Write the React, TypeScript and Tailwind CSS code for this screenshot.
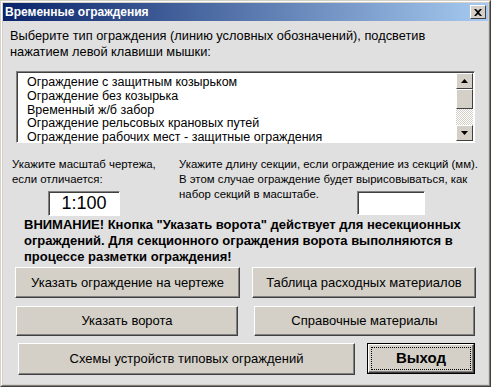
import React from 'react';

const ITEMS = [
  'Ограждение с защитным козырьком',
  'Ограждение без козырька',
  'Временный ж/б забор',
  'Ограждение рельсовых крановых путей',
  'Ограждение рабочих мест - защитные ограждения',
];

const font = { fontFamily: '"Liberation Sans", Arial, sans-serif' };

// classic raised 3D button
function Btn({ className, children }: { className: string; children: React.ReactNode }) {
  return (
    <div
      className={`flex items-center justify-center bg-[#d4d0c8] border-t border-l border-t-white border-l-white border-r border-b border-r-[#404040] border-b-[#404040] shadow-[inset_-1px_-1px_0_#808080,inset_1px_1px_0_#d4d0c8] text-[13px] text-black ${className}`}
    >
      {children}
    </div>
  );
}

export default function App() {
  return (
    <div className="w-[491px] h-[387px] bg-[#d4d0c8]" style={font}>
      <div className="w-[491px] h-[387px] border-t border-l border-[#d4d0c8] border-r border-b border-r-[#404040] border-b-[#404040]">
        <div className="w-full h-full border-t border-l border-t-white border-l-white border-r border-b border-r-[#808080] border-b-[#808080] p-px flex flex-col">
          {/* title bar */}
          <div className="h-[18px] shrink-0 flex items-center justify-between pl-[2px] pr-[2px] bg-[linear-gradient(to_right,#0a246a,#a6caf0)]">
            <span className="text-white font-bold text-[12px] leading-none">Временные ограждения</span>
            <div className="w-[16px] h-[14px] bg-[#d4d0c8] border-t border-l border-t-white border-l-white border-r border-b border-r-[#404040] border-b-[#404040] flex items-center justify-center">
              <svg width="8" height="7" viewBox="0 0 8 7">
                <path d="M0 0h2l2 2 2-2h2L5 3.5 8 7H6L4 5 2 7H0l3-3.5z" fill="#000" />
              </svg>
            </div>
          </div>

          {/* client area */}
          <div className="flex-1 bg-[#e0e0e0] flex flex-col text-black">
            <p className="mt-[7px] ml-[7px] text-[12.8px] leading-[16px]">
              Выберите тип ограждения (линию условных обозначений), подсветив
              <br />
              нажатием левой клавиши мышки:
            </p>

            {/* listbox */}
            <div className="mt-[11px] ml-[13px] w-[459px] h-[72px] flex bg-white border-t border-l border-t-[#808080] border-l-[#808080] border-r border-b border-r-white border-b-white shadow-[inset_1px_1px_0_#404040]">
              <div className="flex-1 pl-[10px] pt-[4px]">
                {ITEMS.map((it) => (
                  <div key={it} className="text-[12.5px] leading-[13.8px] whitespace-nowrap">
                    {it}
                  </div>
                ))}
              </div>
              <div className="w-[17px] flex flex-col mt-px mb-px mr-px">
                <div className="h-[16px] bg-[#d4d0c8] border-t border-l border-t-white border-l-white border-r border-b border-r-[#404040] border-b-[#404040] flex items-center justify-center">
                  <svg width="7" height="4" viewBox="0 0 7 4"><path d="M3.5 0L7 4H0z" fill="#000" /></svg>
                </div>
                <div className="h-[20px] bg-[#d4d0c8] border-t border-l border-t-white border-l-white border-r border-b border-r-[#404040] border-b-[#404040]" />
                <div className="flex-1 bg-[repeating-conic-gradient(#d4d0c8_0%_25%,#ffffff_0%_50%)] bg-size-[2px_2px]" />
                <div className="h-[16px] bg-[#d4d0c8] border-t border-l border-t-white border-l-white border-r border-b border-r-[#404040] border-b-[#404040] flex items-center justify-center">
                  <svg width="7" height="4" viewBox="0 0 7 4"><path d="M0 0h7L3.5 4z" fill="#000" /></svg>
                </div>
              </div>
            </div>

            {/* scale & section */}
            <div className="mt-[14px] flex text-[11.4px] leading-[15px] whitespace-nowrap">
              <div className="ml-[9px] w-[167px] flex flex-col">
                <span>Укажите масштаб чертежа,</span>
                <span>если отличается:</span>
                <div className="mt-[4px] ml-[36px] w-[72px] h-[25px] bg-white border-t border-l border-t-[#808080] border-l-[#808080] border-r border-b border-r-white border-b-white shadow-[inset_1px_1px_0_#404040] flex items-center justify-center text-[18px]">
                  1:100
                </div>
              </div>
              <div className="flex flex-col">
                <span>Укажите длину секции, если ограждение из секций (мм).</span>
                <span>В этом случае ограждение будет вырисовываться, как</span>
                <div className="flex items-start">
                  <span className="w-[178px]">набор секций в масштабе.</span>
                  <div className="mt-[4px] w-[68px] h-[24px] bg-white border-t border-l border-t-[#808080] border-l-[#808080] border-r border-b border-r-white border-b-white shadow-[inset_1px_1px_0_#404040]" />
                </div>
              </div>
            </div>

            {/* warning */}
            <p className="mt-[1px] ml-[21px] text-[13px] leading-[16px] font-bold">
              ВНИМАНИЕ! Кнопка "Указать ворота" действует для несекционных
              <br />
              ограждений. Для секционного ограждения ворота выполняются в
              <br />
              процессе разметки ограждения!
            </p>

            {/* buttons */}
            <div className="mt-[2px] flex">
              <Btn className="ml-[12px] w-[225px] h-[31px]">Указать ограждение на чертеже</Btn>
              <Btn className="ml-[12px] w-[224px] h-[31px]">Таблица расходных материалов</Btn>
            </div>
            <div className="mt-[8px] flex">
              <Btn className="ml-[13px] w-[222px] h-[30px]">Указать ворота</Btn>
              <Btn className="ml-[16px] w-[221px] h-[30px]">Справочные материалы</Btn>
            </div>
            <div className="mt-[7px] flex">
              <Btn className="ml-[15px] w-[337px] h-[32px]">Схемы устройств типовых ограждений</Btn>
              <div className="ml-[12px] w-[108px] h-[31px] border border-black">
                <div className="w-full h-full bg-[#d4d0c8] border-t border-l border-t-white border-l-white border-r border-b border-r-[#404040] border-b-[#404040] shadow-[inset_-1px_-1px_0_#808080] p-[2px]">
                  <div className="w-full h-full border border-dotted border-black flex items-center justify-center font-bold text-[15px]">
                    Выход
                  </div>
                </div>
              </div>
            </div>
          </div>
        </div>
      </div>
    </div>
  );
}
